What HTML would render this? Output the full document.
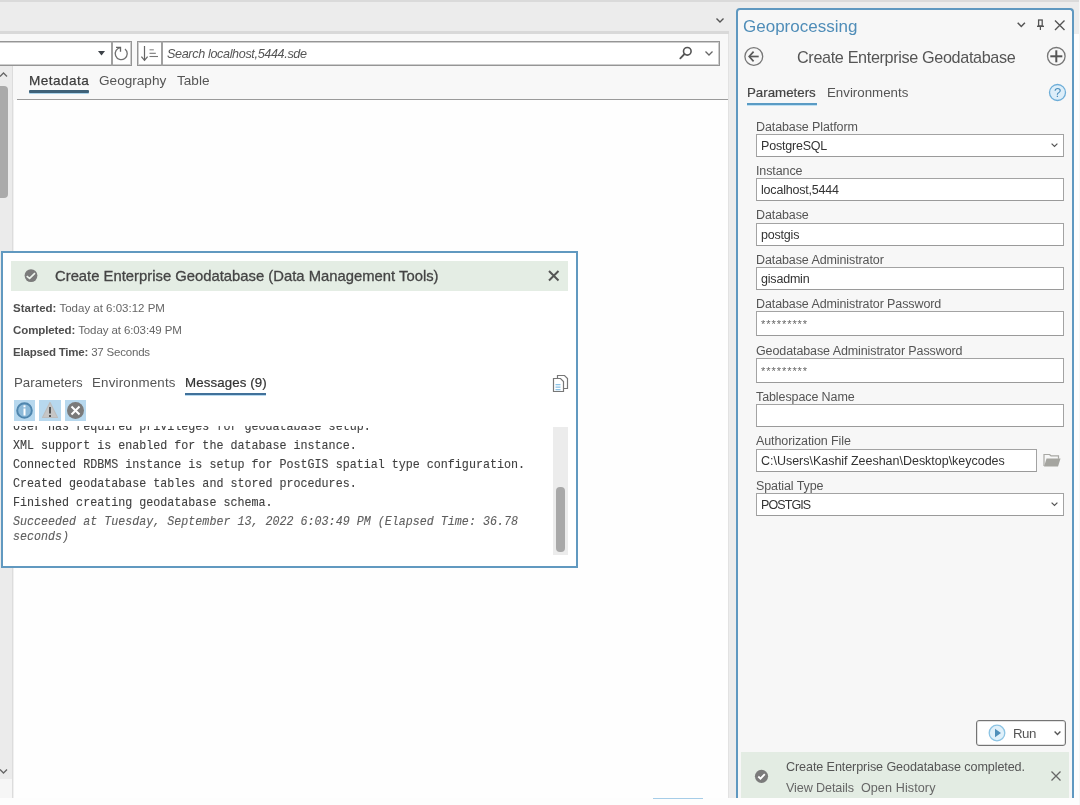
<!DOCTYPE html>
<html><head><meta charset="utf-8">
<style>
*{margin:0;padding:0;box-sizing:border-box}
html,body{width:1080px;height:805px;overflow:hidden;background:#fdfdfd;font-family:"Liberation Sans",sans-serif;color:#444}
.a{position:absolute}
.t{position:absolute;white-space:nowrap;line-height:1}
body>div,body>svg{will-change:transform}
.lbl{position:absolute;white-space:nowrap;line-height:1;left:756px;font-size:12.5px;color:#555;letter-spacing:-0.1px}
.box{position:absolute;left:756px;width:308px;height:23px;background:#fff;border:1px solid #a3a3a3;border-bottom-color:#9a9a9a}
.val{position:absolute;white-space:nowrap;line-height:1;left:761px;font-size:12.5px;color:#333;letter-spacing:-0.2px}
.mono{position:absolute;white-space:nowrap;line-height:1;left:13px;font-family:"Liberation Mono",monospace;font-size:11.7px;color:#404040;transform:scaleY(1.1);transform-origin:0 9px;-webkit-text-stroke:0.1px #404040}
svg{position:absolute;overflow:visible}
</style></head><body>
<!-- top strip -->
<div class="a" style="left:0;top:0;width:1080px;height:34px;background:#ececec;border-top:2px solid #dadada"></div>
<div class="a" style="left:0;top:31px;width:729px;height:3px;background:#d9d9d9"></div>
<svg style="left:716px;top:18px" width="9" height="5"><polyline points="0.5,0.5 4,4 7.5,0.5" fill="none" stroke="#555" stroke-width="1.4"/></svg>
<!-- left main panel -->
<div class="a" style="left:0;top:34px;width:729px;height:764px;background:#f8f8f8"></div>
<div class="a" style="left:729px;top:34px;width:7px;height:771px;background:#ececec"></div>
<!-- toolbar -->
<div class="a" style="left:-2px;top:41px;width:134px;height:25px;background:#fff;border:1px solid #959595;box-shadow:inset 0 0 0 1px #cdcdcd"></div>
<div class="a" style="left:110.5px;top:41px;width:1.5px;height:25px;background:#a0a0a0"></div>
<svg style="left:98px;top:51px" width="7" height="5"><polygon points="0,0 7,0 3.5,4.5" fill="#3d4248"/></svg>
<svg style="left:100px;top:38px" width="30" height="26"><path d="M20.6,9.6 A6 6 0 1 0 25,10.9" fill="none" stroke="#707070" stroke-width="1.3"/><polyline points="16,9.4 20.5,9.4 20.5,13.7" fill="none" stroke="#666" stroke-width="1.3"/></svg>
<div class="a" style="left:137px;top:41px;width:583px;height:25px;background:#fff;border:1px solid #959595;box-shadow:inset 0 0 0 1px #cdcdcd"></div>
<div class="a" style="left:161px;top:41px;width:1.5px;height:25px;background:#a0a0a0"></div>
<svg style="left:100px;top:38px" width="62" height="26"><line x1="44.5" y1="8" x2="44.5" y2="22.4" stroke="#666" stroke-width="1.2"/><polyline points="41.4,18.6 44.5,22.4 47.6,18.6" fill="none" stroke="#666" stroke-width="1.2"/><line x1="49.5" y1="11.8" x2="53.8" y2="11.8" stroke="#888" stroke-width="1.1"/><line x1="49.5" y1="15.3" x2="55.8" y2="15.3" stroke="#777" stroke-width="1.1"/><line x1="49.5" y1="18.5" x2="58" y2="18.5" stroke="#777" stroke-width="1.1"/></svg>
<div class="t" style="left:167px;top:48px;font-size:12.6px;font-style:italic;color:#555;letter-spacing:-0.35px">Search localhost,5444.sde</div>
<svg style="left:679px;top:46px" width="14" height="14"><circle cx="8.3" cy="5.3" r="3.8" fill="none" stroke="#555" stroke-width="1.6"/><line x1="5.5" y1="8" x2="1.3" y2="12.3" stroke="#555" stroke-width="1.8" stroke-linecap="round"/></svg>
<svg style="left:705px;top:51px" width="9" height="5"><polyline points="0.5,0.5 4,4 7.5,0.5" fill="none" stroke="#666" stroke-width="1.3"/></svg>

<!-- tabs -->
<div class="t" style="left:29px;top:74px;font-size:13.6px;color:#3c3c3c;letter-spacing:0.45px;-webkit-text-stroke:0.25px #3c3c3c">Metadata</div>
<div class="t" style="left:99px;top:74px;font-size:13.6px;color:#555">Geography</div>
<div class="t" style="left:177px;top:74px;font-size:13.6px;color:#555">Table</div>
<div class="a" style="left:29px;top:90px;width:60px;height:3px;background:#3e6178;border-radius:1px;box-shadow:0 1px 0 #a9d2ea"></div>
<div class="a" style="left:17px;top:98.5px;width:711px;height:1.5px;background:#9a9a9a"></div>
<!-- left scrollbar -->
<div class="a" style="left:0;top:66px;width:13px;height:732px;background:#f6f6f6;border-right:1px solid #dcdcdc"></div><div class="a" style="left:0;top:66px;width:12px;height:713px;background:#ebebeb"></div>
<svg style="left:0;top:72px" width="9" height="5"><polyline points="0,4.5 3.5,1 7,4.5" fill="none" stroke="#666" stroke-width="1.3"/></svg>
<div class="a" style="left:0;top:86px;width:8px;height:112px;background:#aaaaaa;border-radius:0 4px 4px 0"></div>
<svg style="left:0;top:769px" width="9" height="5"><polyline points="0,0.5 3.5,4 7,0.5" fill="none" stroke="#666" stroke-width="1.3"/></svg>
<!-- white content -->
<div class="a" style="left:13px;top:100px;width:715px;height:698px;background:#fefefe;border-left:1px solid #f0f0f0"></div>
<div class="a" style="left:0;top:798px;width:1080px;height:7px;background:#fdfdfd"></div>
<div class="a" style="left:653px;top:798px;width:50px;height:1px;background:#a6cde8"></div><div class="a" style="left:728px;top:34px;width:1px;height:764px;background:#e2e2e2"></div>

<!-- dialog -->
<div class="a" style="left:1px;top:251px;width:577px;height:317px;background:#fff;border:2px solid #6199c0"></div>
<div class="a" style="left:11px;top:261px;width:557px;height:30px;background:#e4ede4"></div>
<svg style="left:24px;top:269px" width="15" height="15"><circle cx="7" cy="6.6" r="6.4" fill="#7b7b7b"/><polyline points="2.7,7.1 5.6,9.4 11,4.1" fill="none" stroke="#eef5ee" stroke-width="1.6"/></svg>
<div class="t" style="left:55px;top:269px;font-size:14.8px;color:#444;letter-spacing:0.01px;-webkit-text-stroke:0.3px #444">Create Enterprise Geodatabase (Data Management Tools)</div>
<svg style="left:548px;top:270px" width="12" height="12"><path d="M1,1 L10.5,10.5 M10.5,1 L1,10.5" stroke="#555" stroke-width="2"/></svg>
<div class="t" style="left:13px;top:303px;font-size:11.5px;color:#555"><b style="color:#4e4e4e">Started:</b><span style="color:#666"> Today at 6:03:12 PM</span></div>
<div class="t" style="left:13px;top:325px;font-size:11.5px;color:#555;letter-spacing:-0.1px"><b style="color:#4e4e4e">Completed:</b><span style="color:#666"> Today at 6:03:49 PM</span></div>
<div class="t" style="left:13px;top:347px;font-size:11.5px;color:#555;letter-spacing:-0.2px"><b style="color:#4e4e4e">Elapsed Time:</b><span style="color:#666"> 37 Seconds</span></div>
<div class="t" style="left:14px;top:376px;font-size:13.3px;color:#555">Parameters</div>
<div class="t" style="left:92px;top:376px;font-size:13.3px;color:#555;letter-spacing:0.2px">Environments</div>
<div class="t" style="left:185px;top:376px;font-size:13.3px;color:#333;letter-spacing:0.1px;-webkit-text-stroke:0.2px #333">Messages (9)</div>
<div class="a" style="left:185px;top:393px;width:81px;height:2px;background:#41719a;box-shadow:0 1px 0 #b8daf0"></div>
<!-- copy icon -->
<svg style="left:552px;top:374px" width="18" height="20"><path d="M5.5,1.5 h7 l3,3 v10 h-10 z" fill="#fff" stroke="#777" stroke-width="1.2"/><path d="M1.5,4.5 h7 l3,3 v10 h-10 z" fill="#fff" stroke="#777" stroke-width="1.2"/><rect x="3.5" y="10" width="5" height="1.3" fill="#8cc3e6"/><rect x="3.5" y="12.5" width="5" height="1.3" fill="#8cc3e6"/><rect x="3.5" y="15" width="5" height="1.3" fill="#8cc3e6"/></svg>
<!-- filter buttons -->
<div class="a" style="left:14px;top:400px;width:21px;height:21px;background:#b7d8ee"></div>
<div class="a" style="left:39px;top:400px;width:22px;height:21px;background:#b7d8ee"></div>
<div class="a" style="left:65px;top:400px;width:21px;height:21px;background:#b7d8ee"></div>
<svg style="left:14px;top:400px" width="21" height="21"><circle cx="10.5" cy="10.5" r="7.3" fill="#8dbad9" stroke="#4f86ae" stroke-width="2"/><rect x="9.5" y="8.5" width="2" height="7" fill="#fff"/><rect x="9.5" y="5.3" width="2" height="2" fill="#fff"/></svg>
<svg style="left:39px;top:400px" width="22" height="21"><polygon points="11,2.5 18.5,17.5 3.5,17.5" fill="#c6c6c6" stroke="#bdbdbd" stroke-width="1.2" stroke-linejoin="round"/><rect x="10" y="7" width="2" height="6.5" fill="#555"/><rect x="10" y="15" width="2" height="2" fill="#555"/></svg>
<svg style="left:65px;top:400px" width="21" height="21"><circle cx="10.5" cy="10.5" r="8.5" fill="#7a7a7a"/><path d="M6.5,6.5 L14.5,14.5 M14.5,6.5 L6.5,14.5" stroke="#fff" stroke-width="2"/></svg>
<!-- messages -->
<div class="a" style="left:3px;top:426px;width:548px;height:129px;overflow:hidden">
<div class="mono" style="left:10px;top:-4px">User has required privileges for geodatabase setup.</div>
<div class="mono" style="left:10px;top:15px">XML support is enabled for the database instance.</div>
<div class="mono" style="left:10px;top:34px">Connected RDBMS instance is setup for PostGIS spatial type configuration.</div>
<div class="mono" style="left:10px;top:53px">Created geodatabase tables and stored procedures.</div>
<div class="mono" style="left:10px;top:72px">Finished creating geodatabase schema.</div>
<div class="mono" style="left:10px;top:91px;font-style:italic;color:#5e5e5e;-webkit-text-stroke:0.1px #5e5e5e">Succeeded at Tuesday, September 13, 2022 6:03:49 PM (Elapsed Time: 36.78</div>
<div class="mono" style="left:10px;top:106px;font-style:italic;color:#5e5e5e;-webkit-text-stroke:0.1px #5e5e5e">seconds)</div>
</div>
<div class="a" style="left:553px;top:427px;width:15px;height:128px;background:#ececec"></div>
<div class="a" style="left:556px;top:487px;width:9px;height:65px;background:#a8a8a8;border-radius:4px"></div>

<!-- geoprocessing pane -->
<div class="a" style="left:736px;top:8px;width:338px;height:790px;background:#f7f7f7;border:2px solid #5f98c0;border-bottom:none;border-radius:4px 4px 0 0"></div>
<div class="t" style="left:743px;top:18px;font-size:17px;color:#4f8db8">Geoprocessing</div>
<svg style="left:1017px;top:22px" width="10" height="7"><polyline points="0.7,0.7 4.3,4.5 7.9,0.7" fill="none" stroke="#555" stroke-width="1.5"/></svg>
<svg style="left:1036px;top:19px" width="10" height="12"><rect x="2.6" y="1" width="3.6" height="6" fill="none" stroke="#555" stroke-width="1.3"/><line x1="1" y1="7.3" x2="8" y2="7.3" stroke="#555" stroke-width="1.4"/><line x1="4.4" y1="7.3" x2="4.4" y2="11" stroke="#555" stroke-width="1.2"/></svg>
<svg style="left:1054px;top:20px" width="12" height="11"><path d="M1,0.5 L10.5,10 M10.5,0.5 L1,10" stroke="#555" stroke-width="1.4"/></svg>
<svg style="left:743px;top:46px" width="22" height="22"><circle cx="10.8" cy="10.5" r="8.9" fill="none" stroke="#777" stroke-width="1.3"/><line x1="6.8" y1="10.5" x2="15.7" y2="10.5" stroke="#5a5a5a" stroke-width="1.7"/><polyline points="10.6,5.6 6.2,10.5 10.6,15.4" fill="none" stroke="#5a5a5a" stroke-width="1.7"/></svg>
<div class="t" style="left:797px;top:49px;font-size:16.2px;color:#555;letter-spacing:-0.35px">Create Enterprise Geodatabase</div>
<svg style="left:1046px;top:46px" width="22" height="22"><circle cx="10.3" cy="10.3" r="8.8" fill="none" stroke="#777" stroke-width="1.3"/><line x1="4.3" y1="10.3" x2="16.3" y2="10.3" stroke="#555" stroke-width="2"/><line x1="10.3" y1="4.3" x2="10.3" y2="16.3" stroke="#555" stroke-width="2"/></svg>
<div class="t" style="left:747px;top:86px;font-size:13.3px;color:#444;-webkit-text-stroke:0.2px #444">Parameters</div>
<div class="t" style="left:827px;top:86px;font-size:13.3px;color:#555">Environments</div>
<div class="a" style="left:747px;top:103px;width:70px;height:2px;background:#5a9bc4;box-shadow:0 1px 0 #bfe0f3"></div>
<svg style="left:1048px;top:83px" width="20" height="20"><circle cx="9.5" cy="9.5" r="8" fill="#ddeef9" stroke="#6eaed8" stroke-width="1.3"/><text x="9.5" y="14" text-anchor="middle" font-family="Liberation Sans" font-size="13" fill="#4a8dbb">?</text></svg>

<div class="lbl" style="top:121px">Database Platform</div>
<div class="box" style="top:134px"></div>
<div class="val" style="top:140px">PostgreSQL</div>
<svg style="left:1051px;top:143px" width="8" height="5"><polyline points="0.6,0.6 3.5,3.5 6.4,0.6" fill="none" stroke="#555" stroke-width="1.2"/></svg>

<div class="lbl" style="top:165px">Instance</div>
<div class="box" style="top:178px"></div>
<div class="val" style="top:184px">localhost,5444</div>

<div class="lbl" style="top:209px">Database</div>
<div class="box" style="top:223px"></div>
<div class="val" style="top:229px">postgis</div>

<div class="lbl" style="top:254px">Database Administrator</div>
<div class="box" style="top:267px"></div>
<div class="val" style="top:273px">gisadmin</div>

<div class="lbl" style="top:298px">Database Administrator Password</div>
<div class="box" style="top:311px;height:25px"></div>
<div class="val" style="top:319px;font-size:11px;color:#666;letter-spacing:0.95px">*********</div>

<div class="lbl" style="top:345px">Geodatabase Administrator Password</div>
<div class="box" style="top:358px;height:25px"></div>
<div class="val" style="top:366px;font-size:11px;color:#666;letter-spacing:0.95px">*********</div>

<div class="lbl" style="top:391px">Tablespace Name</div>
<div class="box" style="top:404px"></div>

<div class="lbl" style="top:435px">Authorization File</div>
<div class="box" style="top:449px;width:281px"></div>
<div class="val" style="top:455px;letter-spacing:-0.02px">C:\Users\Kashif Zeeshan\Desktop\keycodes</div>
<svg style="left:1043px;top:453px" width="19" height="15"><path d="M1,13 V1.5 h5.5 l1.5,1.3 h7.5 v3" fill="none" stroke="#a8a8a4" stroke-width="1.2"/><polygon points="3.5,5.5 17.5,5.5 15,13.5 1,13.5" fill="#a5a5a0"/></svg>

<div class="lbl" style="top:480px">Spatial Type</div>
<div class="box" style="top:493px"></div>
<div class="val" style="top:499px;letter-spacing:-0.9px">POSTGIS</div>
<svg style="left:1051px;top:502px" width="8" height="5"><polyline points="0.6,0.6 3.5,3.5 6.4,0.6" fill="none" stroke="#555" stroke-width="1.2"/></svg>

<!-- run button -->
<div class="a" style="left:976px;top:720px;width:90px;height:26px;background:#fff;border:1px solid #747474;border-radius:3px;box-shadow:inset 0 0 0 1px #e2e2e2"></div>
<svg style="left:988px;top:724px" width="19" height="19"><circle cx="9" cy="9" r="7.8" fill="#dff0fa" stroke="#8cc4e4" stroke-width="1.3"/><polygon points="7,4.8 13,9 7,13.2" fill="#4f8fba"/></svg>
<div class="t" style="left:1013px;top:727px;font-size:13.3px;color:#555;letter-spacing:-0.5px">Run</div>
<svg style="left:1054px;top:731px" width="8" height="5"><polyline points="0.6,0.6 3.5,3.5 6.4,0.6" fill="none" stroke="#555" stroke-width="1.4"/></svg>

<!-- notification -->
<div class="a" style="left:741px;top:752px;width:328px;height:46px;background:#e3ece3"></div>
<svg style="left:754px;top:769px" width="15" height="15"><circle cx="7.5" cy="7.3" r="6.6" fill="#7b7b7b"/><polyline points="4.3,7.5 6.5,9.7 10.8,5.1" fill="none" stroke="#fff" stroke-width="1.8"/></svg>
<div class="t" style="left:786px;top:761px;font-size:12.6px;color:#555;letter-spacing:-0.1px">Create Enterprise Geodatabase completed.</div>
<div class="t" style="left:786px;top:782px;font-size:12.6px;color:#666;letter-spacing:-0.1px">View Details<span style="margin-left:7px;letter-spacing:0.1px">Open History</span></div>
<svg style="left:1051px;top:771px" width="11" height="11"><path d="M0.5,0.5 L9.5,9.5 M9.5,0.5 L0.5,9.5" stroke="#666" stroke-width="1.3"/></svg>

<div class="a" style="left:1079px;top:0;width:1px;height:805px;background:#f6f6f6"></div>
</body></html>
